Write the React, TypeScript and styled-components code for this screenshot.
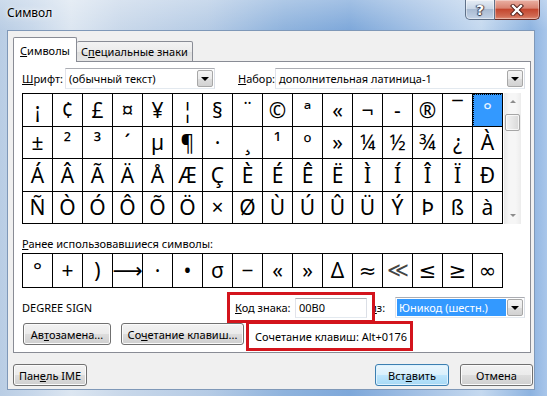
import React from "react";
import styled, { createGlobalStyle } from "styled-components";

const UI = `"Segoe UI", "Noto Sans", "Open Sans", sans-serif`;

const Global = createGlobalStyle`
  html, body { margin: 0; padding: 0; }
  body {
    width: 547px; height: 396px; overflow: hidden;
    font-family: ${UI}; font-size: 11px; color: #000;
  }
  * { box-sizing: border-box; }
`;

const Window = styled.div`
  width: 547px;
  height: 396px;
  display: flex;
  flex-direction: column;
  padding: 0 12px 6px 7px;
  background:
    linear-gradient(180deg, rgba(255,255,255,0.28) 0px, rgba(255,255,255,0) 30px),
    linear-gradient(90deg, #b9cde4 0%, #c7d7ea 6%, #dce6f1 13%, #c9d8ea 22%, #b5cbe5 38%, #8fb3dd 52%, #7ea8da 64%, #a8c4e6 78%, #c5d9ef 88%, #8db3e0 97%, #a9c6ea 100%);
`;

const TitleBar = styled.div`
  height: 30px;
  flex: none;
  display: flex;
  align-items: flex-start;
  justify-content: space-between;
  margin-right: -5px;
`;

const Title = styled.div`
  padding-top: 5px;
  line-height: 16px;
  font-size: 12px;
  text-shadow: 0 0 6px rgba(255,255,255,0.9), 0 0 2px rgba(255,255,255,0.8);
`;

const Captions = styled.div`
  display: flex;
`;

const HelpButton = styled.div`
  width: 30px;
  height: 20px;
  border: 1px solid #5f7189;
  border-top: none;
  border-radius: 0 0 0 5px;
  background: linear-gradient(180deg, #e6edf5 0%, #c9d6e6 45%, #a9bbd2 50%, #c3d3e7 100%);
  box-shadow: inset 0 0 0 1px rgba(255,255,255,0.45);
  display: flex;
  align-items: center;
  justify-content: center;
  color: #fff;
  font: bold 14px "DejaVu Sans", sans-serif;
  text-shadow: 0 0 1px #334, 1px 0 1px #445, -1px 0 1px #445, 0 1px 1px #334;
`;

const CloseButton = styled.div`
  width: 45px;
  height: 20px;
  border: 1px solid #6a2c24;
  border-top: none;
  border-left: none;
  border-radius: 0 0 5px 0;
  background: linear-gradient(180deg, #eab0a3 0%, #d98472 42%, #c4472f 50%, #d06a52 85%, #e0907a 100%);
  box-shadow: inset 0 0 0 1px rgba(255,255,255,0.35);
  display: flex;
  align-items: center;
  justify-content: center;
`;

const Client = styled.div`
  flex: 1;
  display: flex;
  flex-direction: column;
  background: #f0f0f0;
  border: 1px solid #7f98b8;
  padding: 6px 1px 3px 5px;
`;

const TabStrip = styled.div`
  display: flex;
  align-items: flex-end;
  height: 25px;
  margin-bottom: -1px;
  position: relative;
  z-index: 1;
`;

const Tab = styled.div<{ $active?: boolean }>`
  display: flex;
  align-items: center;
  justify-content: center;
  white-space: nowrap;
  border: 1px solid #898c95;
  border-bottom: ${(p) => (p.$active ? "none" : "1px solid #898c95")};
  ${(p) => (p.$active ? "" : "border-left: none;")}
  width: ${(p) => (p.$active ? "64px" : "116px")};
  height: ${(p) => (p.$active ? "25px" : "21px")};
  background: ${(p) =>
    p.$active ? "#ffffff" : "linear-gradient(180deg, #f3f3f3 0%, #ebebeb 50%, #dedede 51%, #e6e6e6 100%)"};
  padding-bottom: ${(p) => (p.$active ? "0" : "1px")};
  border-radius: 2px 2px 0 0;
`;

const Mn = styled.span`
  text-decoration: underline;
  text-underline-offset: 1px;
`;

const Panel = styled.div`
  margin-right: 2px;
  background: #ffffff;
  border: 1px solid #898c95;
  padding: 6px 0 1px 8px;
  display: flex;
  flex-direction: column;
`;

const FieldRow = styled.div`
  display: flex;
  align-items: center;
  height: 21px;
`;

const FieldLabel = styled.div<{ $w: number; $ml?: number }>`
  width: ${(p) => p.$w}px;
  margin-left: ${(p) => p.$ml ?? 0}px;
  flex: none;
  white-space: nowrap;
`;

const Combo = styled.div<{ $w: number }>`
  width: ${(p) => p.$w}px;
  height: 21px;
  flex: none;
  display: flex;
  align-items: stretch;
  border: 1px solid #abadb3;
  border-color: #abadb3 #dbdfe6 #e3e9ef #e2e3ea;
  background: #fff;
  padding: 1px;
`;

const ComboText = styled.div<{ $sel?: boolean }>`
  flex: 1;
  display: flex;
  align-items: center;
  padding-left: 2px;
  white-space: nowrap;
  overflow: hidden;
  background: ${(p) => (p.$sel ? "#3399ff" : "transparent")};
  color: ${(p) => (p.$sel ? "#fff" : "#000")};
  margin-right: 1px;
`;

const ComboArrow = styled.div`
  width: 16px;
  flex: none;
  border: 1px solid #a7a7a7;
  border-radius: 2px;
  background: linear-gradient(180deg, #f4f4f4 0%, #ebebeb 50%, #dddddd 51%, #d2d2d2 100%);
  display: flex;
  align-items: center;
  justify-content: center;
  &::after {
    content: "";
    border-left: 4px solid transparent;
    border-right: 4px solid transparent;
    border-top: 4px solid #000;
    margin-top: 1px;
  }
`;

const GridArea = styled.div`
  display: flex;
  margin-top: 4px;
  height: 131px;
`;

const CharGrid = styled.div`
  display: grid;
  grid-template-columns: repeat(16, 30px);
  grid-template-rows: 33px 32px 33px 32px;
  border-top: 1px solid #000;
  border-left: 1px solid #000;
  width: 481px;
`;

const Cell = styled.div<{ $sel?: boolean; $thin?: boolean }>`
  border-right: 1px solid #000;
  border-bottom: 1px solid #000;
  display: flex;
  align-items: center;
  justify-content: center;
  font-family: ${(p) => (p.$thin ? `"DejaVu Sans", sans-serif` : `"Noto Sans", "DejaVu Sans", sans-serif`)};
  font-size: 21px;
  line-height: 1;
  background: ${(p) => (p.$sel ? "#3399ff" : "#fff")};
  color: ${(p) => (p.$sel ? "#e8f4ff" : p.$thin ? "#444" : "#000")};
  font-weight: ${(p) => (p.$thin ? 300 : 400)};
  outline: ${(p) => (p.$sel ? "1px dotted #000" : "none")};
  outline-offset: -1px;
`;

const Scrollbar = styled.div`
  width: 17px;
  height: 131px;
  margin-left: 1px;
  background: linear-gradient(90deg, #e9e9e9 0%, #f6f6f6 30%, #f6f6f6 70%, #ececec 100%);
  display: flex;
  flex-direction: column;
  align-items: center;
`;

const ScrollArrow = styled.div<{ $up?: boolean }>`
  height: 17px;
  width: 17px;
  display: flex;
  align-items: center;
  justify-content: center;
  &::after {
    content: "";
    border-left: 3px solid transparent;
    border-right: 3px solid transparent;
    ${(p) => (p.$up ? "border-bottom: 3px solid #8c8c8c;" : "border-top: 3px solid #8c8c8c;")}
  }
`;

const Thumb = styled.div`
  width: 15px;
  height: 17px;
  margin-top: 4px;
  border: 1px solid #a6a6a6;
  border-radius: 2px;
  background: linear-gradient(90deg, #f3f3f3 0%, #e6e6e6 50%, #d8d8d8 100%);
  box-shadow: inset 0 0 0 1px rgba(255,255,255,0.7);
`;

const ScrollSpacer = styled.div`
  flex: 1;
`;

const SectionLabel = styled.div`
  margin-top: 12px;
  line-height: 15px;
  height: 15px;
`;

const RecentRow = styled.div`
  margin-top: 2px;
  display: grid;
  grid-template-columns: repeat(16, 30px);
  grid-template-rows: 34px;
  width: 481px;
  border-top: 1px solid #000;
  border-left: 1px solid #000;
`;

const InfoRow = styled.div`
  margin-top: 4px;
  height: 31px;
  display: flex;
  align-items: center;
`;

const CharName = styled.div`
  width: 205px;
  flex: none;
`;

const RedBox = styled.div<{ $w: number; $pl: number }>`
  position: relative;
  z-index: 2;
  width: ${(p) => p.$w}px;
  height: 31px;
  flex: none;
  border: 3px solid #d3141c;
  background: #fff;
  display: flex;
  align-items: center;
  padding-left: ${(p) => p.$pl}px;
  white-space: nowrap;
`;

const CodeInput = styled.div`
  margin-left: auto;
  margin-right: 5px;
  width: 72px;
  height: 20px;
  border: 1px solid #abadb3;
  border-color: #abadb3 #dbdfe6 #e3e9ef #e2e3ea;
  background: #fff;
  display: flex;
  align-items: center;
  padding-left: 3px;
`;

const FromLabel = styled.div`
  margin-left: -5px;
  width: 25px;
  flex: none;
`;

const ButtonRow = styled.div`
  margin-top: -2px;
  height: 30px;
  display: flex;
  align-items: flex-start;
`;

const Button = styled.div<{ $w: number; $ml?: number; $mt?: number; $def?: boolean }>`
  width: ${(p) => p.$w}px;
  margin-left: ${(p) => p.$ml ?? 0}px;
  margin-top: ${(p) => p.$mt ?? 0}px;
  height: 22px;
  flex: none;
  border: 1px solid ${(p) => (p.$def ? "#3c7fb1" : "#707070")};
  border-radius: 3px;
  background: ${(p) =>
    p.$def
      ? "linear-gradient(180deg, #eaf6fd 0%, #d9f0fc 50%, #bee6fd 51%, #a7d9f5 100%)"
      : "linear-gradient(180deg, #f2f2f2 0%, #ebebeb 50%, #dddddd 51%, #cfcfcf 100%)"};
  box-shadow: inset 0 0 0 1px ${(p) => (p.$def ? "#ddf2fe" : "#fbfbfb")};
  display: flex;
  align-items: center;
  justify-content: center;
  white-space: nowrap;
`;

const BottomRow = styled.div`
  margin-top: 11px;
  display: flex;
  align-items: center;
`;

const Spacer = styled.div`
  flex: 1;
`;

const rows: string[][] = [
  ["¡", "¢", "£", "¤", "¥", "¦", "§", "¨", "©", "ª", "«", "¬", "-", "®", "¯", "°"],
  ["±", "²", "³", "´", "µ", "¶", "·", "¸", "¹", "º", "»", "¼", "½", "¾", "¿", "À"],
  [..."ÁÂÃÄÅÆÇÈÉÊËÌÍÎÏÐ"],
  [..."ÑÒÓÔÕÖ×ØÙÚÛÜÝÞßà"],
];

const recent = ["°", "+", ")", "⟶", "·", "•", "σ", "−", "«", "»", "Δ", "≈", "≪", "≤", "≥", "∞"];

export default function App() {
  return (
    <>
      <Global />
      <Window>
        <TitleBar>
          <Title>Символ</Title>
          <Captions>
            <HelpButton>?</HelpButton>
            <CloseButton>
              <svg width="14" height="12" viewBox="0 0 14 12">
                <path d="M3 2 L11 10 M11 2 L3 10" stroke="#4a1a14" strokeWidth="4.2" strokeLinecap="square" fill="none" />
                <path d="M3 2 L11 10 M11 2 L3 10" stroke="#ffffff" strokeWidth="2.4" strokeLinecap="square" fill="none" />
              </svg>
            </CloseButton>
          </Captions>
        </TitleBar>
        <Client>
          <TabStrip>
            <Tab $active>
              <span><Mn>С</Mn>имволы</span>
            </Tab>
            <Tab>
              <span>С<Mn>п</Mn>ециальные знаки</span>
            </Tab>
          </TabStrip>
          <Panel>
            <FieldRow>
              <FieldLabel $w={43}><Mn>Ш</Mn>рифт:</FieldLabel>
              <Combo $w={150}>
                <ComboText>(обычный текст)</ComboText>
                <ComboArrow />
              </Combo>
              <FieldLabel $w={37} $ml={23}><Mn>Н</Mn>абор:</FieldLabel>
              <Combo $w={250}>
                <ComboText>дополнительная латиница-1</ComboText>
                <ComboArrow />
              </Combo>
            </FieldRow>
            <GridArea>
              <CharGrid>
                {rows.map((r, ri) =>
                  r.map((c, ci) => (
                    <Cell key={`${ri}-${ci}`} $sel={ri === 0 && ci === 15}>
                      {c}
                    </Cell>
                  ))
                )}
              </CharGrid>
              <Scrollbar>
                <ScrollArrow $up />
                <Thumb />
                <ScrollSpacer />
                <ScrollArrow />
              </Scrollbar>
            </GridArea>
            <SectionLabel><Mn>Р</Mn>анее использовавшиеся символы:</SectionLabel>
            <RecentRow>
              {recent.map((c, i) => (
                <Cell key={i} $thin={c === "≪"}>{c}</Cell>
              ))}
            </RecentRow>
            <InfoRow>
              <CharName>DEGREE SIGN</CharName>
              <RedBox $w={148} $pl={5}>
                <span><Mn>К</Mn>од знака:</span>
                <CodeInput>00B0</CodeInput>
              </RedBox>
              <FromLabel><Mn>и</Mn>з:</FromLabel>
              <Combo $w={130}>
                <ComboText $sel>Юникод (шестн.)</ComboText>
                <ComboArrow />
              </Combo>
            </InfoRow>
            <ButtonRow>
              <Button $w={88} $ml={1} $mt={2}>
                <span>Ав<Mn>т</Mn>озамена...</span>
              </Button>
              <Button $w={123} $ml={10} $mt={2}>
                <span>Со<Mn>ч</Mn>етание клавиш...</span>
              </Button>
              <RedBox $w={167} $pl={6} style={{ height: 30, marginLeft: 2 }}>
                Сочетание клавиш: Alt+0176
              </RedBox>
            </ButtonRow>
          </Panel>
          <BottomRow>
            <Button $w={74}>
              <span>Пан<Mn>е</Mn>ль IME</span>
            </Button>
            <Spacer />
            <Button $w={74} $def>
              <span>Вст<Mn>а</Mn>вить</span>
            </Button>
            <Button $w={73} $ml={11}>
              Отмена
            </Button>
          </BottomRow>
        </Client>
      </Window>
    </>
  );
}
